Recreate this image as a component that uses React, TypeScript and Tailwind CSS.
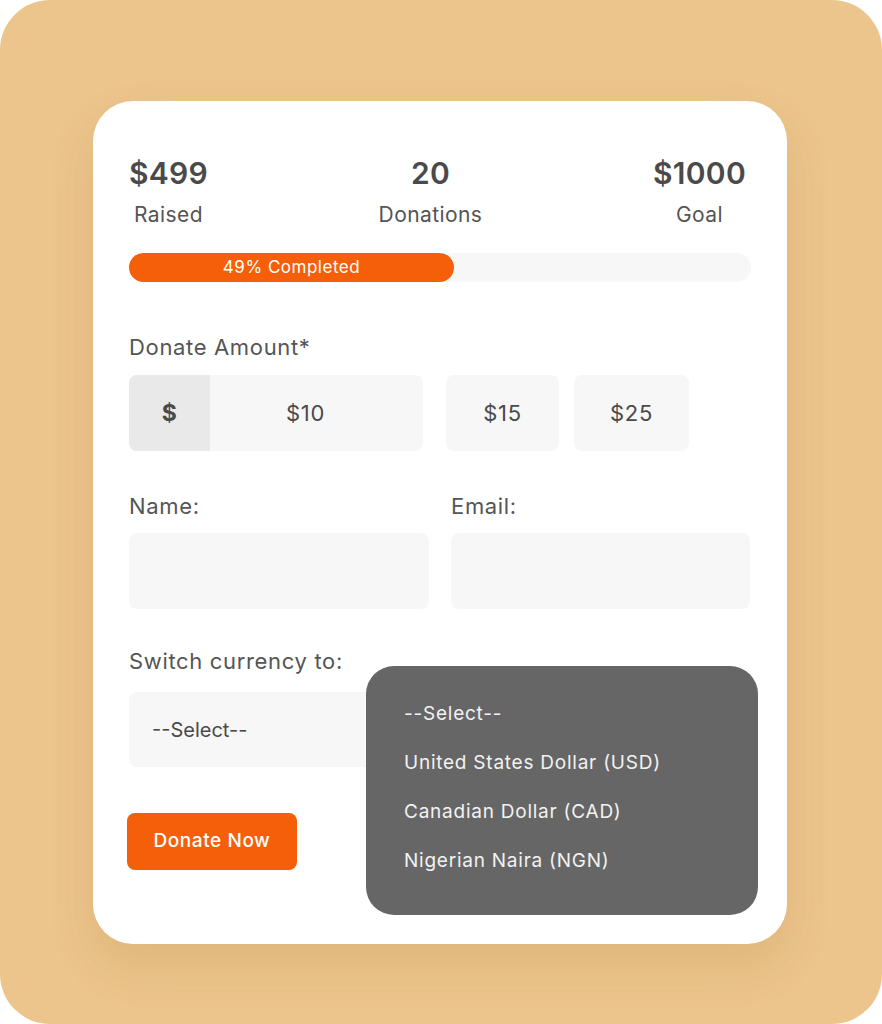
export default function App() {
  const stats = [
    { value: "$499", label: "Raised" },
    { value: "20", label: "Donations" },
    { value: "$1000", label: "Goal" },
  ];
  const options = ["--Select--", "United States Dollar (USD)", "Canadian Dollar (CAD)", "Nigerian Naira (NGN)"];

  return (
    <div className="w-[882px] h-[1024px] bg-white" style={{ fontFamily: "Inter, 'Noto Sans', sans-serif" }}>
      <div className="w-full h-full rounded-[50px] bg-[#ecc58c] pt-[101px] pl-[93px]">
        {/* card */}
        <div className="relative w-[694px] h-[843px] rounded-[40px] bg-white px-[36px] pt-[55px] shadow-[0_22px_45px_rgba(140,90,30,0.14)]">
          <div className="flex justify-between pr-[5px] text-[#4a4a4a]">
            {stats.map((s) => (
              <div key={s.label} className="flex flex-col items-center">
                <span className="text-[30px] leading-[34px] font-semibold tracking-[0.01em]">{s.value}</span>
                <span className="mt-[12px] text-[21px] leading-[26px] tracking-[0.02em] text-[#555]">{s.label}</span>
              </div>
            ))}
          </div>

          {/* progress */}
          <div className="mt-[25px] h-[29px] w-full rounded-full bg-[#f7f7f7]">
            <div className="h-full w-[325px] rounded-full bg-[#f55f0a] flex items-center justify-center text-white text-[17px] tracking-[0.03em]">
              49% Completed
            </div>
          </div>

          <div className="mt-[51px] text-[22px] leading-[28px] tracking-[0.03em] text-[#555]">Donate Amount*</div>
          <div className="mt-[14px] flex h-[76px] gap-[15px] text-[22px] tracking-[0.03em] text-[#4a4a4a]">
            <div className="flex w-[294px] rounded-[8px] overflow-hidden bg-[#f7f7f7]">
              <div className="w-[81px] bg-[#e9e9e9] flex items-center justify-center font-bold text-[23px]">$</div>
              <div className="flex-1 flex items-center justify-center pr-[22px]">$10</div>
            </div>
            <div className="ml-[8px] w-[113px] rounded-[8px] bg-[#f7f7f7] flex items-center justify-center">$15</div>
            <div className="w-[115px] rounded-[8px] bg-[#f7f7f7] flex items-center justify-center">$25</div>
          </div>

          <div className="mt-[41px] grid grid-cols-[300px_299px] gap-x-[22px]">
            <div>
              <div className="text-[22px] leading-[28px] tracking-[0.03em] text-[#555]">Name:</div>
              <div className="mt-[13px] h-[76px] rounded-[8px] bg-[#f7f7f7]" />
            </div>
            <div>
              <div className="text-[22px] leading-[28px] tracking-[0.03em] text-[#555]">Email:</div>
              <div className="mt-[13px] h-[76px] rounded-[8px] bg-[#f7f7f7]" />
            </div>
          </div>

          <div className="mt-[38px] text-[22px] leading-[28px] tracking-[0.03em] text-[#555]">Switch currency to:</div>
          <div className="mt-[17px] h-[75px] w-[300px] rounded-[8px] bg-[#f7f7f7] flex items-center pl-[23px] text-[20px] text-[#4a4a4a]">
            --Select--
          </div>

          <button className="mt-[46px] -ml-[2px] h-[57px] w-[170px] rounded-[8px] bg-[#f55f0a] text-white text-[19px] font-medium tracking-[0.03em]">
            Donate Now
          </button>

          {/* open dropdown */}
          <div className="absolute left-[273px] top-[565px] w-[392px] h-[249px] rounded-[28px] bg-[#666666] pt-[24px] pl-[38px]">
            {options.map((o) => (
              <div key={o} className="h-[49px] flex items-center text-[19px] tracking-[0.04em] text-[#f2f2f2]">
                {o}
              </div>
            ))}
          </div>
        </div>
      </div>
    </div>
  );
}
